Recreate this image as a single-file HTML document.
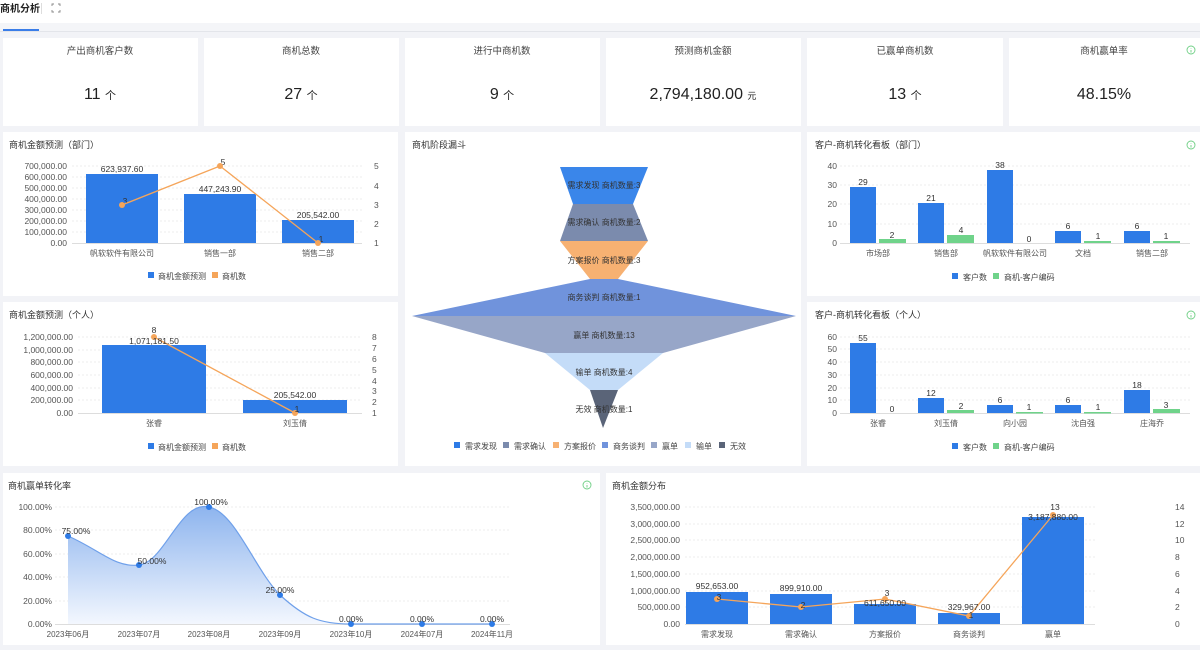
<!DOCTYPE html><html><head><meta charset="utf-8"><style>
body{margin:0;width:1200px;height:645px;overflow:hidden;background:#f2f3f7;font-family:"Liberation Sans","Noto Sans CJK SC",sans-serif}
svg text{font-family:"Liberation Sans","Noto Sans CJK SC",sans-serif}
</style></head><body>
<svg width="1200" height="645" viewBox="0 0 1200 645" xmlns="http://www.w3.org/2000/svg">
<defs><linearGradient id="ga" x1="0" y1="0" x2="0" y2="1"><stop offset="0" stop-color="#8db4ee"/><stop offset="1" stop-color="#f3f7fe"/></linearGradient></defs>
<rect x="0" y="0" width="1200" height="23" fill="#fff"/>
<rect x="0" y="23" width="1200" height="8" fill="#f4f5f8"/>
<rect x="0" y="31" width="1200" height="1" fill="#e3e5ea"/>
<rect x="3" y="29" width="36" height="2" fill="#3a7de8"/>
<text x="0" y="12" font-size="10" font-weight="bold" fill="#222">商机分析</text>
<rect x="41" y="3" width="1" height="11" fill="#ddd"/>
<g stroke="#888" stroke-width="0.9" fill="none"><path d="M52 6v-2h2M58 4h2v2M60 10v2h-2M54 12h-2v-2"/></g>
<g fill="#fff">
<rect x="3" y="38" width="195" height="88"/><rect x="204" y="38" width="195" height="88"/><rect x="405" y="38" width="195" height="88"/><rect x="606" y="38" width="195" height="88"/><rect x="807" y="38" width="196" height="88"/><rect x="1009" y="38" width="191" height="88"/>
<rect x="3" y="132" width="395" height="164"/><rect x="405" y="132" width="396" height="334"/><rect x="807" y="132" width="393" height="164"/>
<rect x="3" y="302" width="395" height="164"/><rect x="807" y="302" width="393" height="164"/>
<rect x="3" y="473" width="597" height="172"/><rect x="606" y="473" width="594" height="172"/>
</g>
<g font-size="9.5" fill="#444" text-anchor="middle">
<text x="100" y="54">产出商机客户数</text><text x="301" y="54">商机总数</text><text x="502" y="54">进行中商机数</text><text x="703" y="54">预测商机金额</text><text x="905" y="54">已赢单商机数</text><text x="1104" y="54">商机赢单率</text>
</g>
<g font-size="16" fill="#222" text-anchor="middle">
<text x="100" y="99">11 <tspan font-size="11">个</tspan></text>
<text x="301" y="99">27 <tspan font-size="11">个</tspan></text>
<text x="502" y="99">9 <tspan font-size="11">个</tspan></text>
<text x="703" y="99">2,794,180.00 <tspan font-size="9">元</tspan></text>
<text x="905" y="99">13 <tspan font-size="11">个</tspan></text>
<text x="1104" y="99">48.15%</text>
</g>
<g fill="none" stroke="#6fcf85" stroke-width="0.9">
<circle cx="1191" cy="50" r="4"/><circle cx="1191" cy="145" r="4"/><circle cx="1191" cy="315" r="4"/><circle cx="587" cy="485" r="4"/>
<path d="M1191 48.5v0.5M1191 50v2.5M1191 143.5v0.5M1191 145v2.5M1191 313.5v0.5M1191 315v2.5M587 483.5v0.5M587 485v2.5"/>
</g>
<g font-size="9" fill="#333">
<text x="9" y="148">商机金额预测（部门）</text><text x="412" y="148">商机阶段漏斗</text><text x="815" y="148">客户-商机转化看板（部门）</text>
<text x="9" y="318">商机金额预测（个人）</text><text x="815" y="318">客户-商机转化看板（个人）</text>
<text x="8" y="489">商机赢单转化率</text><text x="612" y="489">商机金额分布</text>
</g>
<!-- chart 1 -->
<g stroke="#eee" stroke-dasharray="2,2"><path d="M72 166H362M72 177H362M72 188H362M72 199H362M72 210H362M72 221H362M72 232H362"/></g>
<path d="M72 243.5H362" stroke="#ddd"/>
<g font-size="8.5" fill="#555" text-anchor="end"><text x="67" y="169">700,000.00</text><text x="67" y="180">600,000.00</text><text x="67" y="191">500,000.00</text><text x="67" y="202">400,000.00</text><text x="67" y="213">300,000.00</text><text x="67" y="224">200,000.00</text><text x="67" y="235">100,000.00</text><text x="67" y="246">0.00</text></g>
<g font-size="8.5" fill="#555"><text x="374" y="169">5</text><text x="374" y="189">4</text><text x="374" y="208">3</text><text x="374" y="227">2</text><text x="374" y="246">1</text></g>
<g fill="#2e7be6"><rect x="86" y="174" width="72" height="69"/><rect x="184" y="194" width="72" height="49"/><rect x="282" y="220" width="72" height="23"/></g>
<g font-size="8.5" fill="#333" text-anchor="middle"><text x="122" y="172">623,937.60</text><text x="220" y="192">447,243.90</text><text x="318" y="218">205,542.00</text><text x="125" y="204">3</text><text x="223" y="165">5</text><text x="321" y="242">1</text></g>
<polyline points="122,205 220,166 318,243" fill="none" stroke="#f5a55a" stroke-width="1.3"/>
<g fill="#f5a55a"><circle cx="122" cy="205" r="3"/><circle cx="220" cy="166" r="3"/><circle cx="318" cy="243" r="3"/></g>
<g font-size="8" fill="#555" text-anchor="middle"><text x="122" y="256">帆软软件有限公司</text><text x="220" y="256">销售一部</text><text x="318" y="256">销售二部</text></g>
<g font-size="8" fill="#444"><rect x="148" y="272" width="6" height="6" fill="#2e7be6"/><text x="158" y="279">商机金额预测</text><rect x="212" y="272" width="6" height="6" fill="#f5a55a"/><text x="222" y="279">商机数</text></g>
<!-- chart 2 -->
<g stroke="#eee" stroke-dasharray="2,2"><path d="M78 337H362M78 350H362M78 362H362M78 375H362M78 388H362M78 400H362"/></g>
<path d="M78 413.5H362" stroke="#ddd"/>
<g font-size="8.5" fill="#555" text-anchor="end"><text x="73" y="340">1,200,000.00</text><text x="73" y="353">1,000,000.00</text><text x="73" y="365">800,000.00</text><text x="73" y="378">600,000.00</text><text x="73" y="391">400,000.00</text><text x="73" y="403">200,000.00</text><text x="73" y="416">0.00</text></g>
<g font-size="8.5" fill="#555"><text x="372" y="340">8</text><text x="372" y="351">7</text><text x="372" y="362">6</text><text x="372" y="373">5</text><text x="372" y="384">4</text><text x="372" y="394">3</text><text x="372" y="405">2</text><text x="372" y="416">1</text></g>
<g fill="#2e7be6"><rect x="102" y="345" width="104" height="68"/><rect x="243" y="400" width="104" height="13"/></g>
<polyline points="154,337 295,413" fill="none" stroke="#f5a55a" stroke-width="1.3"/>
<g fill="#f5a55a"><circle cx="154" cy="337" r="3"/><circle cx="295" cy="413" r="3"/></g>
<g font-size="8.5" fill="#333" text-anchor="middle"><text x="154" y="344">1,071,181.50</text><text x="154" y="333">8</text><text x="295" y="398">205,542.00</text><text x="297" y="412">1</text></g>
<g font-size="8" fill="#555" text-anchor="middle"><text x="154" y="426">张睿</text><text x="295" y="426">刘玉倩</text></g>
<g font-size="8" fill="#444"><rect x="148" y="443" width="6" height="6" fill="#2e7be6"/><text x="158" y="450">商机金额预测</text><rect x="212" y="443" width="6" height="6" fill="#f5a55a"/><text x="222" y="450">商机数</text></g>
<!-- funnel -->
<polygon points="560,167 648,167 633,204 573,204" fill="#3a86ea"/>
<polygon points="573,204 633,204 648,241 560,241" fill="#7b8bad"/>
<polygon points="560,241 648,241 618,279 590,279" fill="#f7b172"/>
<polygon points="590,279 618,279 796,316 412,316" fill="#7093dc"/>
<polygon points="412,316 796,316 663,353 545,353" fill="#97a6c8"/>
<polygon points="545,353 663,353 618,390 590,390" fill="#c4dcf8"/>
<polygon points="590,390 618,390 603,428" fill="#5a6478"/>
<g font-size="8" fill="#333" text-anchor="middle"><text x="604" y="188">需求发现 商机数量:3</text><text x="604" y="225">需求确认 商机数量:2</text><text x="604" y="263">方案报价 商机数量:3</text><text x="604" y="300">商务谈判 商机数量:1</text><text x="604" y="338">赢单 商机数量:13</text><text x="604" y="375">输单 商机数量:4</text><text x="604" y="412">无效 商机数量:1</text></g>
<g font-size="8" fill="#444">
<rect x="454" y="442" width="6" height="6" fill="#2e7be6"/><text x="465" y="449">需求发现</text>
<rect x="503" y="442" width="6" height="6" fill="#7b8bad"/><text x="514" y="449">需求确认</text>
<rect x="553" y="442" width="6" height="6" fill="#f7b172"/><text x="564" y="449">方案报价</text>
<rect x="602" y="442" width="6" height="6" fill="#7093dc"/><text x="613" y="449">商务谈判</text>
<rect x="651" y="442" width="6" height="6" fill="#97a6c8"/><text x="662" y="449">赢单</text>
<rect x="685" y="442" width="6" height="6" fill="#c4dcf8"/><text x="696" y="449">输单</text>
<rect x="719" y="442" width="6" height="6" fill="#5a6478"/><text x="730" y="449">无效</text>
</g>
<!-- chart right dept -->
<g stroke="#eee" stroke-dasharray="2,2"><path d="M840 166H1190M840 185H1190M840 204H1190M840 224H1190"/></g>
<path d="M840 243.5H1190" stroke="#ddd"/>
<g font-size="8.5" fill="#555" text-anchor="end"><text x="837" y="169">40</text><text x="837" y="188">30</text><text x="837" y="207">20</text><text x="837" y="227">10</text><text x="837" y="246">0</text></g>
<g fill="#2e7be6"><rect x="850" y="187" width="26" height="56"/><rect x="918" y="203" width="26" height="40"/><rect x="987" y="170" width="26" height="73"/><rect x="1055" y="231" width="26" height="12"/><rect x="1124" y="231" width="26" height="12"/></g>
<g fill="#6fd38a"><rect x="879" y="239" width="27" height="4"/><rect x="947" y="235" width="27" height="8"/><rect x="1084" y="241" width="27" height="2"/><rect x="1153" y="241" width="27" height="2"/></g>
<g font-size="8.5" fill="#333" text-anchor="middle"><text x="863" y="185">29</text><text x="892" y="238">2</text><text x="931" y="201">21</text><text x="961" y="233">4</text><text x="1000" y="168">38</text><text x="1029" y="242">0</text><text x="1068" y="229">6</text><text x="1098" y="239">1</text><text x="1137" y="229">6</text><text x="1166" y="239">1</text></g>
<g font-size="8" fill="#555" text-anchor="middle"><text x="878" y="256">市场部</text><text x="946" y="256">销售部</text><text x="1015" y="256">帆软软件有限公司</text><text x="1083" y="256">文档</text><text x="1152" y="256">销售二部</text></g>
<g font-size="8" fill="#444"><rect x="952" y="273" width="6" height="6" fill="#2e7be6"/><text x="963" y="280">客户数</text><rect x="993" y="273" width="6" height="6" fill="#6fd38a"/><text x="1004" y="280">商机-客户编码</text></g>
<!-- chart right personal -->
<g stroke="#eee" stroke-dasharray="2,2"><path d="M840 337H1190M840 349H1190M840 362H1190M840 375H1190M840 388H1190M840 400H1190"/></g>
<path d="M840 413.5H1190" stroke="#ddd"/>
<g font-size="8.5" fill="#555" text-anchor="end"><text x="837" y="340">60</text><text x="837" y="352">50</text><text x="837" y="365">40</text><text x="837" y="378">30</text><text x="837" y="391">20</text><text x="837" y="403">10</text><text x="837" y="416">0</text></g>
<g fill="#2e7be6"><rect x="850" y="343" width="26" height="70"/><rect x="918" y="398" width="26" height="15"/><rect x="987" y="405" width="26" height="8"/><rect x="1055" y="405" width="26" height="8"/><rect x="1124" y="390" width="26" height="23"/></g>
<g fill="#6fd38a"><rect x="947" y="410" width="27" height="3"/><rect x="1016" y="412" width="27" height="1.5"/><rect x="1084" y="412" width="27" height="1.5"/><rect x="1153" y="409" width="27" height="4"/></g>
<g font-size="8.5" fill="#333" text-anchor="middle"><text x="863" y="341">55</text><text x="892" y="412">0</text><text x="931" y="396">12</text><text x="961" y="409">2</text><text x="1000" y="403">6</text><text x="1029" y="410">1</text><text x="1068" y="403">6</text><text x="1098" y="410">1</text><text x="1137" y="388">18</text><text x="1166" y="408">3</text></g>
<g font-size="8" fill="#555" text-anchor="middle"><text x="878" y="426">张睿</text><text x="946" y="426">刘玉倩</text><text x="1015" y="426">向小园</text><text x="1083" y="426">沈自强</text><text x="1152" y="426">庄海乔</text></g>
<g font-size="8" fill="#444"><rect x="952" y="443" width="6" height="6" fill="#2e7be6"/><text x="963" y="450">客户数</text><rect x="993" y="443" width="6" height="6" fill="#6fd38a"/><text x="1004" y="450">商机-客户编码</text></g>
<!-- conversion rate -->
<g stroke="#eee" stroke-dasharray="2,2"><path d="M55 507H510M55 530H510M55 554H510M55 577H510M55 601H510"/></g>
<path d="M55 624.5H510" stroke="#ddd"/>
<g font-size="8.5" fill="#555" text-anchor="end"><text x="52" y="510">100.00%</text><text x="52" y="533">80.00%</text><text x="52" y="557">60.00%</text><text x="52" y="580">40.00%</text><text x="52" y="604">20.00%</text><text x="52" y="627">0.00%</text></g>
<path d="M68 536 C100 550,115 568,139 565 C165 562,180 500,209 507 C235 512,255 570,280 595 C305 618,320 624,351 624 L492 624 L492 624 L68 624Z" fill="url(#ga)"/>
<path d="M68 536 C100 550,115 568,139 565 C165 562,180 500,209 507 C235 512,255 570,280 595 C305 618,320 624,351 624 L492 624" fill="none" stroke="#6fa0ea" stroke-width="1.2"/>
<g fill="#2e7be6"><circle cx="68" cy="536" r="3"/><circle cx="139" cy="565" r="3"/><circle cx="209" cy="507" r="3"/><circle cx="280" cy="595" r="3"/><circle cx="351" cy="624" r="3"/><circle cx="422" cy="624" r="3"/><circle cx="492" cy="624" r="3"/></g>
<g font-size="8.5" fill="#333" text-anchor="middle"><text x="76" y="534">75.00%</text><text x="152" y="564">50.00%</text><text x="211" y="505">100.00%</text><text x="280" y="593">25.00%</text><text x="351" y="622">0.00%</text><text x="422" y="622">0.00%</text><text x="492" y="622">0.00%</text></g>
<g font-size="8" fill="#555" text-anchor="middle"><text x="68" y="637">2023年06月</text><text x="139" y="637">2023年07月</text><text x="209" y="637">2023年08月</text><text x="280" y="637">2023年09月</text><text x="351" y="637">2023年10月</text><text x="422" y="637">2024年07月</text><text x="492" y="637">2024年11月</text></g>
<!-- amount distribution -->
<g stroke="#eee" stroke-dasharray="2,2"><path d="M685 507H1095M685 524H1095M685 540H1095M685 557H1095M685 574H1095M685 591H1095M685 607H1095"/></g>
<path d="M685 624.5H1095" stroke="#ddd"/>
<g font-size="8.5" fill="#555" text-anchor="end"><text x="680" y="510">3,500,000.00</text><text x="680" y="527">3,000,000.00</text><text x="680" y="543">2,500,000.00</text><text x="680" y="560">2,000,000.00</text><text x="680" y="577">1,500,000.00</text><text x="680" y="594">1,000,000.00</text><text x="680" y="610">500,000.00</text><text x="680" y="627">0.00</text></g>
<g font-size="8.5" fill="#555"><text x="1175" y="510">14</text><text x="1175" y="527">12</text><text x="1175" y="543">10</text><text x="1175" y="560">8</text><text x="1175" y="577">6</text><text x="1175" y="594">4</text><text x="1175" y="610">2</text><text x="1175" y="627">0</text></g>
<g fill="#2e7be6"><rect x="686" y="592" width="62" height="32"/><rect x="770" y="594" width="62" height="30"/><rect x="854" y="604" width="62" height="20"/><rect x="938" y="613" width="62" height="11"/><rect x="1022" y="517" width="62" height="107"/></g>
<polyline points="717,599 801,607 885,599 969,616 1053,515" fill="none" stroke="#f5a55a" stroke-width="1.3"/>
<g fill="#f5a55a"><circle cx="717" cy="599" r="3"/><circle cx="801" cy="607" r="3"/><circle cx="885" cy="599" r="3"/><circle cx="969" cy="616" r="3"/><circle cx="1053" cy="515" r="3"/></g>
<g font-size="8.5" fill="#333" text-anchor="middle"><text x="717" y="589">952,653.00</text><text x="801" y="591">899,910.00</text><text x="885" y="606">611,650.00</text><text x="969" y="610">329,967.00</text><text x="1053" y="520">3,187,880.00</text><text x="719" y="600">3</text><text x="803" y="608">2</text><text x="887" y="596">3</text><text x="971" y="618">1</text><text x="1055" y="510">13</text></g>
<g font-size="8" fill="#555" text-anchor="middle"><text x="717" y="637">需求发现</text><text x="801" y="637">需求确认</text><text x="885" y="637">方案报价</text><text x="969" y="637">商务谈判</text><text x="1053" y="637">赢单</text></g>
</svg>
</body></html>
